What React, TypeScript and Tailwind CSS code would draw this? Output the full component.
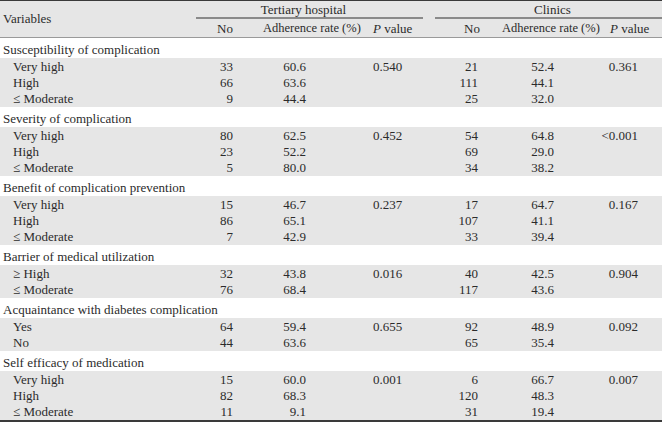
import React from "react";

type Row = { label: string; tNo: string; tAdh: string; tP?: string; cNo: string; cAdh: string; cP?: string };
type Section = { title: string; rows: Row[] };

const sections: Section[] = [
  {
    title: "Susceptibility of complication",
    rows: [
      { label: "Very high", tNo: "33", tAdh: "60.6", tP: "0.540", cNo: "21", cAdh: "52.4", cP: "0.361" },
      { label: "High", tNo: "66", tAdh: "63.6", cNo: "111", cAdh: "44.1" },
      { label: "≤ Moderate", tNo: "9", tAdh: "44.4", cNo: "25", cAdh: "32.0" },
    ],
  },
  {
    title: "Severity of complication",
    rows: [
      { label: "Very high", tNo: "80", tAdh: "62.5", tP: "0.452", cNo: "54", cAdh: "64.8", cP: "<0.001" },
      { label: "High", tNo: "23", tAdh: "52.2", cNo: "69", cAdh: "29.0" },
      { label: "≤ Moderate", tNo: "5", tAdh: "80.0", cNo: "34", cAdh: "38.2" },
    ],
  },
  {
    title: "Benefit of complication prevention",
    rows: [
      { label: "Very high", tNo: "15", tAdh: "46.7", tP: "0.237", cNo: "17", cAdh: "64.7", cP: "0.167" },
      { label: "High", tNo: "86", tAdh: "65.1", cNo: "107", cAdh: "41.1" },
      { label: "≤ Moderate", tNo: "7", tAdh: "42.9", cNo: "33", cAdh: "39.4" },
    ],
  },
  {
    title: "Barrier of medical utilization",
    rows: [
      { label: "≥ High", tNo: "32", tAdh: "43.8", tP: "0.016", cNo: "40", cAdh: "42.5", cP: "0.904" },
      { label: "≤ Moderate", tNo: "76", tAdh: "68.4", cNo: "117", cAdh: "43.6" },
    ],
  },
  {
    title: "Acquaintance with diabetes complication",
    rows: [
      { label: "Yes", tNo: "64", tAdh: "59.4", tP: "0.655", cNo: "92", cAdh: "48.9", cP: "0.092" },
      { label: "No", tNo: "44", tAdh: "63.6", cNo: "65", cAdh: "35.4" },
    ],
  },
  {
    title: "Self efficacy of medication",
    rows: [
      { label: "Very high", tNo: "15", tAdh: "60.0", tP: "0.001", cNo: "6", cAdh: "66.7", cP: "0.007" },
      { label: "High", tNo: "82", tAdh: "68.3", cNo: "120", cAdh: "48.3" },
      { label: "≤ Moderate", tNo: "11", tAdh: "9.1", cNo: "31", cAdh: "19.4" },
    ],
  },
];

function DataRow({ r }: { r: Row }) {
  return (
    <div className="flex h-[16px] items-center leading-[16px]">
      <div className="w-[197px] pl-[13px]">{r.label}</div>
      <div className="w-[36px] text-right">{r.tNo}</div>
      <div className="w-[73px] text-right">{r.tAdh}</div>
      <div className="w-[129px] pl-[67px]">{r.tP ?? ""}</div>
      <div className="w-[43px] text-right">{r.cNo}</div>
      <div className="w-[76px] text-right">{r.cAdh}</div>
      <div className="w-[84px] text-right">{r.cP ?? ""}</div>
    </div>
  );
}

export default function App() {
  return (
    <div
      className="w-[662px] h-[423px] overflow-hidden bg-white text-[13px] text-[#2b2b2b]"
      style={{ fontFamily: '"Liberation Serif", "Times New Roman", serif' }}
    >
      <div className="border-t-[1.5px] border-[#3a3a3a] bg-[#e6e6e6] border-b border-b-[#9a9a9a]">
        <div className="flex h-[36px]">
          <div className="w-[196px] pl-[3px] flex items-center">Variables</div>
          <div className="flex-1 flex flex-col">
            <div className="flex h-[18px]">
              <div className="w-[227px] flex flex-col items-center">
                <div className="h-[16px] leading-[18px] mr-[12px]">Tertiary hospital</div>
                <div className="mt-auto h-[2px] w-full bg-[#8a8a8a]" />
              </div>
              <div className="w-[12px]" />
              <div className="flex-1 flex flex-col items-center">
                <div className="h-[16px] leading-[18px] mr-[-8px]">Clinics</div>
                <div className="mt-auto h-[2px] w-full bg-[#8a8a8a]" />
              </div>
            </div>
            <div className="flex flex-1 items-center">
              <div className="w-[37px] text-right">No</div>
              <div className="w-[140px] pl-[30px] text-[12.5px]">Adherence rate (%)</div>
              <div className="w-[66px]">
                <span className="italic">P</span> value
              </div>
              <div className="w-[41px] text-right">No</div>
              <div className="w-[130px] pl-[22px] text-[12.5px]">Adherence rate (%)</div>
              <div className="pl-[0px]">
                <span className="italic">P</span> value
              </div>
            </div>
          </div>
        </div>
      </div>
      {sections.map((s) => (
        <div key={s.title}>
          <div className="h-[20px] pl-[3px] pt-[3px] leading-[18px] bg-white">{s.title}</div>
          <div className="bg-[#e6e6e6] pt-[1px]">
            {s.rows.map((r) => (
              <DataRow key={r.label} r={r} />
            ))}
          </div>
        </div>
      ))}
      <div className="border-t-[2px] border-[#3a3a3a]" />
    </div>
  );
}
